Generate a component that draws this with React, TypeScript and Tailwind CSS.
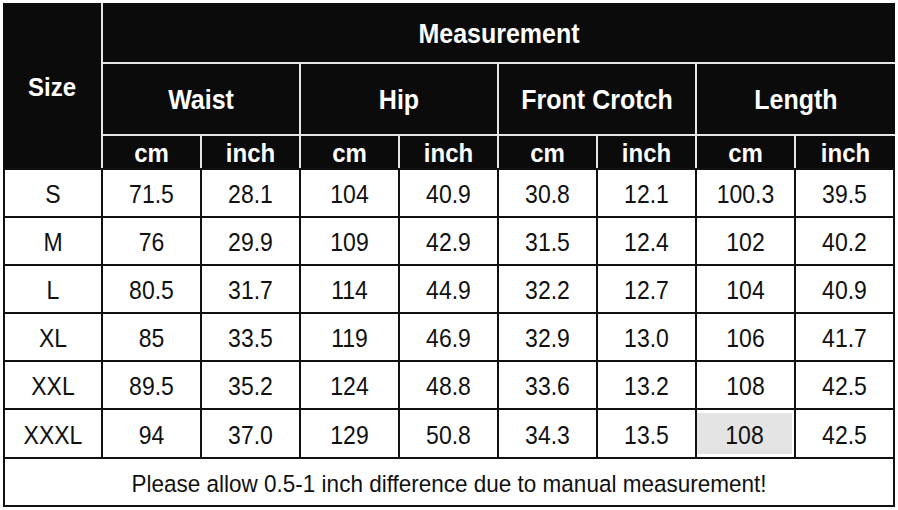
import React from "react";

const groups = ["Waist", "Hip", "Front Crotch", "Length"];

const rows: string[][] = [
  ["S", "71.5", "28.1", "104", "40.9", "30.8", "12.1", "100.3", "39.5"],
  ["M", "76", "29.9", "109", "42.9", "31.5", "12.4", "102", "40.2"],
  ["L", "80.5", "31.7", "114", "44.9", "32.2", "12.7", "104", "40.9"],
  ["XL", "85", "33.5", "119", "46.9", "32.9", "13.0", "106", "41.7"],
  ["XXL", "89.5", "35.2", "124", "48.8", "33.6", "13.2", "108", "42.5"],
  ["XXXL", "94", "37.0", "129", "50.8", "34.3", "13.5", "108", "42.5"],
];

export default function App() {
  return (
    <div
      className="w-[898px] h-[510px] bg-white pl-[3px] pt-[3px]"
      style={{ fontFamily: '"Liberation Sans", Arial, sans-serif' }}
    >
      <div className="w-[892px]">
        {/* header */}
        <div className="grid grid-cols-[98px_repeat(7,97px)_99px] grid-rows-[59px_70px_32px] gap-[2px] bg-[#e6e6e6] text-white font-bold">
          <div className="row-span-3 bg-[#0b0b0b] flex items-center justify-center text-[24px] pt-[2px]">
            <span className="inline-block scale-y-110">Size</span>
          </div>
          <div className="col-span-8 bg-[#0b0b0b] flex items-center justify-center text-[25px] pt-[2px]">
            <span className="inline-block scale-y-110">Measurement</span>
          </div>
          {groups.map((g) => (
            <div
              key={g}
              className="col-span-2 bg-[#0b0b0b] flex items-center justify-center text-[25px] pt-[2px]"
            >
              <span className="inline-block scale-y-110">{g}</span>
            </div>
          ))}
          {groups.map((g) => (
            <React.Fragment key={g + "-u"}>
              <div className="bg-[#0b0b0b] flex items-center justify-center text-[24px] pt-[2px]">
                <span className="inline-block scale-y-110">cm</span>
              </div>
              <div className="bg-[#0b0b0b] flex items-center justify-center text-[24px] pt-[2px]">
                <span className="inline-block scale-y-110">inch</span>
              </div>
            </React.Fragment>
          ))}
        </div>

        {/* body */}
        <div className="grid grid-cols-[96px_repeat(8,97px)] grid-rows-[repeat(5,46px)_47px_46px] gap-[2px] bg-[#111] border-2 border-[#111] text-[#111] text-[23px]">
          {rows.map((r, ri) =>
            r.map((v, ci) => (
              <div key={ri + "-" + ci} className="bg-white flex">
                {ri === 5 && ci === 7 ? (
                  <div className="flex-1 my-[3px] mr-[2px] bg-[#e4e4e4] flex items-center justify-center pt-[3px]">
                    <span className="inline-block scale-y-110">{v}</span>
                  </div>
                ) : (
                  <div className="flex-1 flex items-center justify-center pt-[3px]">
                    <span className="inline-block scale-y-110">{v}</span>
                  </div>
                )}
              </div>
            ))
          )}
          <div className="col-span-9 bg-white flex items-center justify-center text-[22.5px] pt-[3px]">
            <span className="inline-block scale-y-110">
              Please allow 0.5-1 inch difference due to manual measurement!
            </span>
          </div>
        </div>
      </div>
    </div>
  );
}
